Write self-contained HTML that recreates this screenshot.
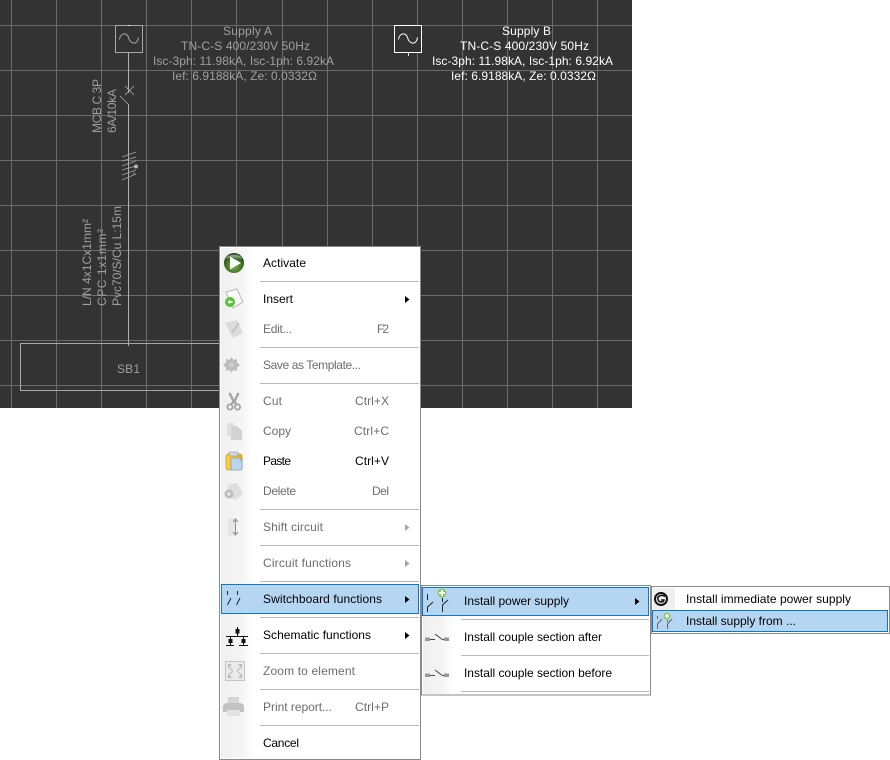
<!DOCTYPE html>
<html><head><meta charset="utf-8"><style>
html,body{margin:0;padding:0;background:#fff;width:890px;height:760px;overflow:hidden}
svg{display:block}
.c{font-family:"Liberation Sans",sans-serif;font-size:12px;fill:#a0a0a0}
.b{font-family:"Liberation Sans",sans-serif;font-size:12px;fill:#fff}
.m{font-family:"Liberation Sans",sans-serif;font-size:12px;fill:#000}
.d{font-family:"Liberation Sans",sans-serif;font-size:12px;fill:#6d6d6d}
</style></head><body>
<svg width="890" height="760" viewBox="0 0 890 760" xmlns="http://www.w3.org/2000/svg">
<defs>
<linearGradient id="col" x1="0" x2="1" y1="0" y2="0"><stop offset="0" stop-color="#f0f0f0"/><stop offset="0.7" stop-color="#f5f5f5"/><stop offset="1" stop-color="#fff"/></linearGradient>
<radialGradient id="gr" cx="0.5" cy="0.65" r="0.6"><stop offset="0" stop-color="#7fb048"/><stop offset="0.7" stop-color="#3f6f25"/><stop offset="1" stop-color="#1d3a12"/></radialGradient>
<linearGradient id="yel" x1="0" x2="1" y1="0" y2="0"><stop offset="0" stop-color="#ffd23c"/><stop offset="1" stop-color="#e8b020"/></linearGradient>
</defs>
<rect x="0" y="0" width="632" height="408" fill="#333"/>
<path stroke="#6b6b6b" stroke-width="1" fill="none" d="M11.5 0V408M56.5 0V408M101.5 0V408M146.5 0V408M191.5 0V408M236.5 0V408M282.5 0V408M327.5 0V408M372.5 0V408M417.5 0V408M462.5 0V408M507.5 0V408M552.5 0V408M597.5 0V408M0 25.5H632M0 70.5H632M0 115.5H632M0 160.5H632M0 205.5H632M0 250.5H632M0 295.5H632M0 340.5H632M0 385.5H632"/>
<!-- Supply A -->
<rect x="115.5" y="25.5" width="27" height="27" fill="#333" stroke="#a8a8a8"/>
<path d="M128 25.500H130" stroke="#eee"/>
<path d="M119.500 39.500C120 33 127 32 128.500 37.500C130 44 137 46 138.500 37.500" fill="none" stroke="#a8a8a8"/>
<path d="M128.500 52V93M128.500 104V346" stroke="#b0b0b0" fill="none"/>
<path d="M125 86L134 95M125 95L134 86M120 96L128 104" stroke="#a8a8a8" stroke-width=".8" fill="none"/>
<path d="M122 157L136 152M122 161L136 157M122 166L136 161M122 170L136 166M122 175L136 170M122 180L136 174M134 172V175" stroke="#a0a0a0" stroke-width=".8" fill="none"/>
<circle cx="136" cy="166.500" r="2" fill="#b5b5b5"/>
<text class="c" x="223" y="35" textLength="49">Supply A</text>
<text class="c" x="181" y="50" textLength="129">TN-C-S 400/230V 50Hz</text>
<text class="c" x="153" y="65" textLength="181">Isc-3ph: 11.98kA, Isc-1ph: 6.92kA</text>
<text class="c" x="172" y="80" textLength="145">Ief: 6.9188kA, Ze: 0.0332Ω</text>
<text class="c" transform="translate(101 133) rotate(-90)" textLength="54">MCB C 3P</text>
<text class="c" transform="translate(116 133) rotate(-90)" textLength="44">6A/10kA</text>
<text class="c" transform="translate(91 306) rotate(-90)" textLength="87">L/N 4x1Cx1mm²</text>
<text class="c" transform="translate(106 306) rotate(-90)" textLength="77">CPC  1x1mm²</text>
<text class="c" transform="translate(121 306) rotate(-90)" textLength="100">Pvc70/S/Cu L:15m</text>
<rect x="20.500" y="343.500" width="230" height="47" fill="none" stroke="#a8a8a8"/>
<text class="c" x="117" y="373" textLength="23">SB1</text>
<!-- Supply B -->
<rect x="394.500" y="25.500" width="27" height="27" fill="#333" stroke="#fff"/>
<path d="M398.500 39.500C399 33 406 32 407.500 37.500C409 44 416 46 417.500 37.500" fill="none" stroke="#fff"/>
<path d="M408.500 53V56" stroke="#ddd"/>
<text class="b" x="502" y="35" textLength="49">Supply B</text>
<text class="b" x="460" y="50" textLength="129">TN-C-S 400/230V 50Hz</text>
<text class="b" x="432" y="65" textLength="181">Isc-3ph: 11.98kA, Isc-1ph: 6.92kA</text>
<text class="b" x="451" y="80" textLength="145">Ief: 6.9188kA, Ze: 0.0332Ω</text>

<!-- Main menu -->
<rect x="219.500" y="246.500" width="201" height="513" fill="#fff" stroke="#8a8a8a"/>
<rect x="221" y="248" width="31" height="510" fill="url(#col)"/>
<path stroke="#b8b8b8" fill="none" d="M260 281.500H419M260 347.500H419M260 383.500H419M260 509.500H419M260 545.500H419M260 581.500H419M260 617.500H419M260 653.500H419M260 689.500H419M260 725.500H419"/>
<rect x="221.500" y="584.500" width="197" height="29" fill="#b5d6f2" stroke="#0a78d0"/>

<text class="m" x="263" y="267" textLength="43">Activate</text>
<text class="m" x="263" y="303" textLength="30">Insert</text>
<text class="d" x="263" y="333" textLength="29">Edit...</text>
<text class="d" x="377" y="333" textLength="12">F2</text>
<text class="d" x="263" y="369" textLength="98">Save as Template...</text>
<text class="d" x="263" y="405" textLength="19">Cut</text>
<text class="d" x="355" y="405" textLength="34">Ctrl+X</text>
<text class="d" x="263" y="435" textLength="28">Copy</text>
<text class="d" x="354" y="435" textLength="35">Ctrl+C</text>
<text class="m" x="263" y="465" textLength="28">Paste</text>
<text class="m" x="355" y="465" textLength="34">Ctrl+V</text>
<text class="d" x="263" y="495" textLength="33">Delete</text>
<text class="d" x="372" y="495" textLength="17">Del</text>
<text class="d" x="263" y="531" textLength="60">Shift circuit</text>
<text class="d" x="263" y="567" textLength="88">Circuit functions</text>
<text class="m" x="263" y="603" textLength="119">Switchboard functions</text>
<text class="m" x="263" y="639" textLength="108">Schematic functions</text>
<text class="d" x="263" y="675" textLength="92">Zoom to element</text>
<text class="d" x="263" y="711" textLength="69">Print report...</text>
<text class="d" x="355" y="711" textLength="34">Ctrl+P</text>
<text class="m" x="263" y="747" textLength="36">Cancel</text>

<path fill="#000" d="M405 296L409.500 299.500L405 303ZM405 596L409.500 599.500L405 603ZM405 632L409.500 635.500L405 639Z"/>
<path fill="#a5a5a5" d="M405 524L409.500 527.500L405 531ZM405 560L409.500 563.500L405 567Z"/>

<!-- Activate -->
<circle cx="234" cy="263" r="10" fill="url(#gr)"/>
<path d="M225.500 259C227.500 253 240.500 253 242.500 259C238.500 257 229.500 257 225.500 259Z" fill="#cfd8c8" opacity=".55"/>
<path d="M230 256.500L241 263L230 269.500Z" fill="#fff"/>
<!-- Insert -->
<path d="M226 292L237 289L243 302L233 308Z" fill="#fafafa" stroke="#a9a9a9" stroke-width=".8"/>
<circle cx="230" cy="302" r="5" fill="#56c22f"/>
<path d="M227.500 302L230 299.500V301H232.500V303H230V304.500Z" fill="#fff"/>
<!-- Edit -->
<path d="M225 323L237 320L243 333L233 338Z" fill="#dcdcdc"/>
<path d="M232 333L239 323" stroke="#c4c4c4" stroke-width="2"/>
<!-- Gear -->
<path d="M231.500 357L233.500 360L237 359L237 362.500L240 365L237 367.500L237 371L233.500 370L231.500 373L229.500 370L226 371L226 367.500L223 365L226 362.500L226 359L229.500 360Z" fill="#bdbdbd"/>
<circle cx="231.500" cy="365" r="2.500" fill="#d0d0d0"/>
<!-- Scissors -->
<path d="M229.500 393L234 402L238.500 393" stroke="#a3a3a3" stroke-width="2.400" fill="none"/>
<path d="M234 401L230.500 405M234 401L237.500 405" stroke="#a3a3a3" stroke-width="2"/>
<circle cx="230" cy="407" r="2.600" fill="none" stroke="#a3a3a3" stroke-width="1.800"/>
<circle cx="237.500" cy="407" r="2.600" fill="none" stroke="#a3a3a3" stroke-width="1.800"/>
<!-- Copy -->
<path d="M227 423H234V436H227Z" fill="#e0e0e0"/>
<path d="M231 426H237L242 431V440H231Z" fill="#d2d2d2"/>
<!-- Paste -->
<rect x="226" y="454" width="16" height="16" rx="2" fill="url(#yel)" stroke="#a88a30" stroke-width=".6"/>
<rect x="229" y="452" width="9" height="4" rx="1" fill="#d0d6dc" stroke="#8a9098" stroke-width=".6"/>
<path d="M231 458H239L242 461V470H231Z" fill="#bcd4ec" stroke="#7b98b8" stroke-width=".6"/>
<!-- Delete -->
<path d="M228 485L237 483L243 494L235 500L227 496Z" fill="#dedede"/>
<circle cx="229" cy="494" r="4.500" fill="#bdbdbd"/>
<circle cx="229" cy="494" r="1.800" fill="#e6e6e6"/>
<!-- Shift -->
<rect x="228" y="518" width="7" height="18" fill="#e6e6e6"/>
<path d="M235.500 519V535M233 522L235.500 519L238 522M233 532L235.500 535L238 532" fill="none" stroke="#8e8e8e"/>
<!-- Switchboard -->
<path d="M227.500 591V595M227.500 605L231 598M237.500 591V595M236.500 605L240 598" stroke="#223" fill="none"/>
<!-- Schematic -->
<path d="M226 636.500H248M237.500 627V636M230.500 636V645M243.500 636V645M226 645.500H234M239 645.500H248" stroke="#111" fill="none"/>
<rect x="235.500" y="629" width="4" height="4.500" fill="#111"/>
<rect x="228.500" y="639" width="4" height="4" fill="#111"/>
<rect x="241.500" y="639" width="4" height="4" fill="#111"/>
<!-- Zoom -->
<rect x="225.500" y="661.500" width="19" height="19" fill="#eaeaea" stroke="#c4c4c4"/>
<path d="M228 664H232L228 668ZM242 664H238L242 668ZM228 678H232L228 674ZM242 678H238L242 674Z" fill="#b8b8b8"/>
<path d="M229 667L233 671M241 667L237 671M229 675L233 671M241 675L237 671" stroke="#c8c8c8" stroke-width="1.500"/>
<!-- Print -->
<path d="M228 697H239V703H228Z" fill="#d6d6d6"/>
<path d="M223 708C223 704 225 703 228 703H239C242 703 244 704 244 708V712H223Z" fill="#c2c2c2"/>
<rect x="227" y="710" width="13" height="6" fill="#e2e2e2"/>

<!-- Submenu 2 -->
<rect x="421.500" y="585.500" width="229" height="109.500" fill="#fff" stroke="#8a8a8a"/>
<rect x="423" y="616" width="30" height="78" fill="url(#col)"/>
<rect x="422.500" y="587.500" width="226" height="28" fill="#b5d6f2" stroke="#0a78d0"/>
<path stroke="#b8b8b8" fill="none" d="M461 619.500H649M461 655.500H649M461 691.500H649"/>
<text class="m" x="464" y="605" textLength="105">Install power supply</text>
<text class="m" x="464" y="641" textLength="138">Install couple section after</text>
<text class="m" x="464" y="677" textLength="148">Install couple section before</text>
<path fill="#000" d="M635 598L639.500 601.500L635 605Z"/>
<path d="M427.500 594V600M427.500 612V607L433 602M442.500 598V602M442.500 612V605L448 600" stroke="#222" fill="none"/>
<circle cx="442" cy="593" r="4.500" fill="#8bc95e"/>
<path d="M442 590V596M439 593H445" stroke="#fff" stroke-width="2"/>
<path d="M430 639.500H435M435 634L443 640M443 639.500H445" fill="none" stroke="#444"/>
<rect x="425" y="637.500" width="5" height="3.500" fill="#999"/>
<rect x="444" y="637.500" width="5" height="3.500" fill="#999"/>
<path d="M430 675.500H435M435 670L443 676M443 675.500H445" fill="none" stroke="#444"/>
<rect x="425" y="673.500" width="5" height="3.500" fill="#999"/>
<rect x="444" y="673.500" width="5" height="3.500" fill="#999"/>

<!-- Submenu 3 -->
<rect x="651.500" y="586.500" width="238" height="47" fill="#fff" stroke="#8a8a8a"/>
<rect x="653" y="588" width="22" height="22" fill="#efefef"/>
<rect x="652.500" y="610.500" width="235" height="21" fill="#b5d6f2" stroke="#0a78d0"/>
<text class="m" x="686" y="603" textLength="165">Install immediate power supply</text>
<text class="m" x="686" y="625" textLength="110">Install supply from ...</text>
<circle cx="661" cy="599" r="6" fill="none" stroke="#111" stroke-width="2"/>
<path d="M665 596.500C662 594 657 596 658 599.500C659 603 664 602.500 664 600H661" fill="none" stroke="#111" stroke-width="1.500"/>
<path d="M657.500 616V619M657.500 629V624L662 619M667.500 620V622M667.500 629V624L672 619" stroke="#666" fill="none"/>
<circle cx="667" cy="616" r="3.500" fill="#8bc95e"/>
<path d="M667 614V618M665 616H669" stroke="#fff" stroke-width="1.500"/>
</svg>
</body></html>
